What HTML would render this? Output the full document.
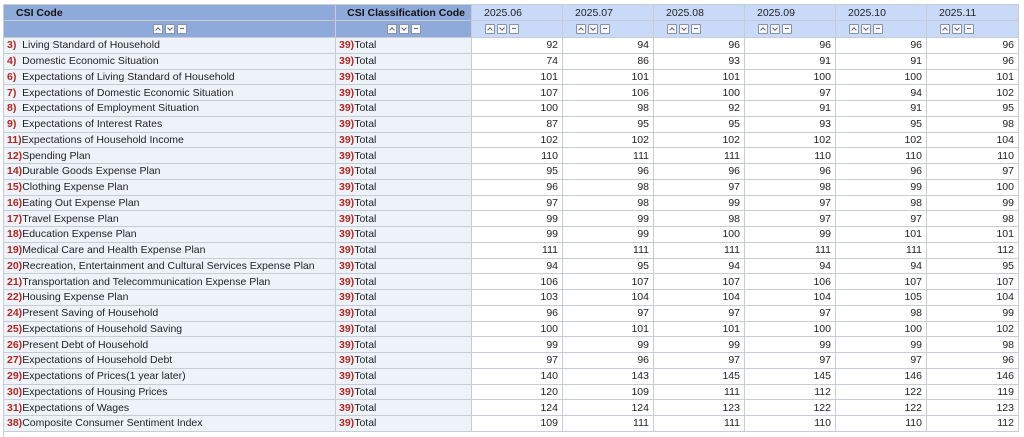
<!DOCTYPE html>
<html><head><meta charset="utf-8"><style>
body{margin:0;background:#fff;width:1024px;height:437px;overflow:hidden;font-family:"Liberation Sans",Arial,sans-serif;font-size:10.5px;color:#222;position:relative}
.r{position:absolute;left:3px;width:1016px;display:flex;box-sizing:border-box}
#rows{position:absolute;left:3px;top:38px;width:1016px}
#rows .r{position:relative;left:0;height:15.75px}
.c{box-sizing:border-box;border-right:1px solid #c8ccd4;border-bottom:1px solid #c8ccd4;padding:0 3px;white-space:nowrap;overflow:hidden;height:100%;display:flex;align-items:center}
.c:first-child{border-left:1px solid #c8ccd4}
.w1{width:333px}.w2{width:136px}.w3{width:91px}.w4{width:92px}
.hb{background:#8eaadb;font-weight:bold;color:#111}
.hd{background:#c9daf8;padding-left:12px}
.c1{background:#eef3fa}
.n{justify-content:flex-end;padding-right:4px}
b{color:#b3261e}
.ic{display:inline-block;width:8px;height:8px;border:1px solid #8a93a3;background:#f6f8fc;margin:0 1px;position:relative;border-radius:1px}
.ic:after{content:"";position:absolute;left:2px;top:3px;width:4px;height:1px;background:#667}
.ic.u:after,.ic.d:after{width:3px;height:3px;border-left:1px solid #667;border-top:1px solid #667;background:none;transform:rotate(45deg);top:3px;left:2px}
.ic.d:after{transform:rotate(225deg);top:1px}
.ctr{justify-content:center}
</style></head><body>
<div class="r" style="top:4px;height:17px;border-top:1px solid #c8ccd4"><div class="c w1 hb" style="padding-left:12px">CSI Code</div><div class="c w2 hb" style="justify-content:flex-end;padding-right:6px">CSI Classification Code</div><div class="c w3 hd">2025.06</div><div class="c w3 hd">2025.07</div><div class="c w3 hd">2025.08</div><div class="c w3 hd">2025.09</div><div class="c w3 hd">2025.10</div><div class="c w4 hd">2025.11</div></div>
<div class="r" style="top:21px;height:17px"><div class="c w1 hb ctr"><span class="ic u"></span><span class="ic d"></span><span class="ic"></span></div><div class="c w2 hb ctr"><span class="ic u"></span><span class="ic d"></span><span class="ic"></span></div><div class="c w3 hd"><span class="ic u"></span><span class="ic d"></span><span class="ic"></span></div><div class="c w3 hd"><span class="ic u"></span><span class="ic d"></span><span class="ic"></span></div><div class="c w3 hd"><span class="ic u"></span><span class="ic d"></span><span class="ic"></span></div><div class="c w3 hd"><span class="ic u"></span><span class="ic d"></span><span class="ic"></span></div><div class="c w3 hd"><span class="ic u"></span><span class="ic d"></span><span class="ic"></span></div><div class="c w4 hd"><span class="ic u"></span><span class="ic d"></span><span class="ic"></span></div></div>
<div id="rows">
<div class="r"><div class="c w1 c1"><b>3)</b>&nbsp; Living Standard of Household</div><div class="c w2 c1"><b>39)</b>Total</div><div class="c w3 n">92</div><div class="c w3 n">94</div><div class="c w3 n">96</div><div class="c w3 n">96</div><div class="c w3 n">96</div><div class="c w4 n">96</div></div>
<div class="r"><div class="c w1 c1"><b>4)</b>&nbsp; Domestic Economic Situation</div><div class="c w2 c1"><b>39)</b>Total</div><div class="c w3 n">74</div><div class="c w3 n">86</div><div class="c w3 n">93</div><div class="c w3 n">91</div><div class="c w3 n">91</div><div class="c w4 n">96</div></div>
<div class="r"><div class="c w1 c1"><b>6)</b>&nbsp; Expectations of Living Standard of Household</div><div class="c w2 c1"><b>39)</b>Total</div><div class="c w3 n">101</div><div class="c w3 n">101</div><div class="c w3 n">101</div><div class="c w3 n">100</div><div class="c w3 n">100</div><div class="c w4 n">101</div></div>
<div class="r"><div class="c w1 c1"><b>7)</b>&nbsp; Expectations of Domestic Economic Situation</div><div class="c w2 c1"><b>39)</b>Total</div><div class="c w3 n">107</div><div class="c w3 n">106</div><div class="c w3 n">100</div><div class="c w3 n">97</div><div class="c w3 n">94</div><div class="c w4 n">102</div></div>
<div class="r"><div class="c w1 c1"><b>8)</b>&nbsp; Expectations of Employment Situation</div><div class="c w2 c1"><b>39)</b>Total</div><div class="c w3 n">100</div><div class="c w3 n">98</div><div class="c w3 n">92</div><div class="c w3 n">91</div><div class="c w3 n">91</div><div class="c w4 n">95</div></div>
<div class="r"><div class="c w1 c1"><b>9)</b>&nbsp; Expectations of Interest Rates</div><div class="c w2 c1"><b>39)</b>Total</div><div class="c w3 n">87</div><div class="c w3 n">95</div><div class="c w3 n">95</div><div class="c w3 n">93</div><div class="c w3 n">95</div><div class="c w4 n">98</div></div>
<div class="r"><div class="c w1 c1"><b>11)</b>Expectations of Household Income</div><div class="c w2 c1"><b>39)</b>Total</div><div class="c w3 n">102</div><div class="c w3 n">102</div><div class="c w3 n">102</div><div class="c w3 n">102</div><div class="c w3 n">102</div><div class="c w4 n">104</div></div>
<div class="r"><div class="c w1 c1"><b>12)</b>Spending Plan</div><div class="c w2 c1"><b>39)</b>Total</div><div class="c w3 n">110</div><div class="c w3 n">111</div><div class="c w3 n">111</div><div class="c w3 n">110</div><div class="c w3 n">110</div><div class="c w4 n">110</div></div>
<div class="r"><div class="c w1 c1"><b>14)</b>Durable Goods Expense Plan</div><div class="c w2 c1"><b>39)</b>Total</div><div class="c w3 n">95</div><div class="c w3 n">96</div><div class="c w3 n">96</div><div class="c w3 n">96</div><div class="c w3 n">96</div><div class="c w4 n">97</div></div>
<div class="r"><div class="c w1 c1"><b>15)</b>Clothing Expense Plan</div><div class="c w2 c1"><b>39)</b>Total</div><div class="c w3 n">96</div><div class="c w3 n">98</div><div class="c w3 n">97</div><div class="c w3 n">98</div><div class="c w3 n">99</div><div class="c w4 n">100</div></div>
<div class="r"><div class="c w1 c1"><b>16)</b>Eating Out Expense Plan</div><div class="c w2 c1"><b>39)</b>Total</div><div class="c w3 n">97</div><div class="c w3 n">98</div><div class="c w3 n">99</div><div class="c w3 n">97</div><div class="c w3 n">98</div><div class="c w4 n">99</div></div>
<div class="r"><div class="c w1 c1"><b>17)</b>Travel Expense Plan</div><div class="c w2 c1"><b>39)</b>Total</div><div class="c w3 n">99</div><div class="c w3 n">99</div><div class="c w3 n">98</div><div class="c w3 n">97</div><div class="c w3 n">97</div><div class="c w4 n">98</div></div>
<div class="r"><div class="c w1 c1"><b>18)</b>Education Expense Plan</div><div class="c w2 c1"><b>39)</b>Total</div><div class="c w3 n">99</div><div class="c w3 n">99</div><div class="c w3 n">100</div><div class="c w3 n">99</div><div class="c w3 n">101</div><div class="c w4 n">101</div></div>
<div class="r"><div class="c w1 c1"><b>19)</b>Medical Care and Health Expense Plan</div><div class="c w2 c1"><b>39)</b>Total</div><div class="c w3 n">111</div><div class="c w3 n">111</div><div class="c w3 n">111</div><div class="c w3 n">111</div><div class="c w3 n">111</div><div class="c w4 n">112</div></div>
<div class="r"><div class="c w1 c1"><b>20)</b>Recreation, Entertainment and Cultural Services Expense Plan</div><div class="c w2 c1"><b>39)</b>Total</div><div class="c w3 n">94</div><div class="c w3 n">95</div><div class="c w3 n">94</div><div class="c w3 n">94</div><div class="c w3 n">94</div><div class="c w4 n">95</div></div>
<div class="r"><div class="c w1 c1"><b>21)</b>Transportation and Telecommunication Expense Plan</div><div class="c w2 c1"><b>39)</b>Total</div><div class="c w3 n">106</div><div class="c w3 n">107</div><div class="c w3 n">107</div><div class="c w3 n">106</div><div class="c w3 n">107</div><div class="c w4 n">107</div></div>
<div class="r"><div class="c w1 c1"><b>22)</b>Housing Expense Plan</div><div class="c w2 c1"><b>39)</b>Total</div><div class="c w3 n">103</div><div class="c w3 n">104</div><div class="c w3 n">104</div><div class="c w3 n">104</div><div class="c w3 n">105</div><div class="c w4 n">104</div></div>
<div class="r"><div class="c w1 c1"><b>24)</b>Present Saving of Household</div><div class="c w2 c1"><b>39)</b>Total</div><div class="c w3 n">96</div><div class="c w3 n">97</div><div class="c w3 n">97</div><div class="c w3 n">97</div><div class="c w3 n">98</div><div class="c w4 n">99</div></div>
<div class="r"><div class="c w1 c1"><b>25)</b>Expectations of Household Saving</div><div class="c w2 c1"><b>39)</b>Total</div><div class="c w3 n">100</div><div class="c w3 n">101</div><div class="c w3 n">101</div><div class="c w3 n">100</div><div class="c w3 n">100</div><div class="c w4 n">102</div></div>
<div class="r"><div class="c w1 c1"><b>26)</b>Present Debt of Household</div><div class="c w2 c1"><b>39)</b>Total</div><div class="c w3 n">99</div><div class="c w3 n">99</div><div class="c w3 n">99</div><div class="c w3 n">99</div><div class="c w3 n">99</div><div class="c w4 n">98</div></div>
<div class="r"><div class="c w1 c1"><b>27)</b>Expectations of Household Debt</div><div class="c w2 c1"><b>39)</b>Total</div><div class="c w3 n">97</div><div class="c w3 n">96</div><div class="c w3 n">97</div><div class="c w3 n">97</div><div class="c w3 n">97</div><div class="c w4 n">96</div></div>
<div class="r"><div class="c w1 c1"><b>29)</b>Expectations of Prices(1 year later)</div><div class="c w2 c1"><b>39)</b>Total</div><div class="c w3 n">140</div><div class="c w3 n">143</div><div class="c w3 n">145</div><div class="c w3 n">145</div><div class="c w3 n">146</div><div class="c w4 n">146</div></div>
<div class="r"><div class="c w1 c1"><b>30)</b>Expectations of Housing Prices</div><div class="c w2 c1"><b>39)</b>Total</div><div class="c w3 n">120</div><div class="c w3 n">109</div><div class="c w3 n">111</div><div class="c w3 n">112</div><div class="c w3 n">122</div><div class="c w4 n">119</div></div>
<div class="r"><div class="c w1 c1"><b>31)</b>Expectations of Wages</div><div class="c w2 c1"><b>39)</b>Total</div><div class="c w3 n">124</div><div class="c w3 n">124</div><div class="c w3 n">123</div><div class="c w3 n">122</div><div class="c w3 n">122</div><div class="c w4 n">123</div></div>
<div class="r"><div class="c w1 c1"><b>38)</b>Composite Consumer Sentiment Index</div><div class="c w2 c1"><b>39)</b>Total</div><div class="c w3 n">109</div><div class="c w3 n">111</div><div class="c w3 n">111</div><div class="c w3 n">110</div><div class="c w3 n">110</div><div class="c w4 n">112</div></div>
</div>
<div style="position:absolute;left:3px;top:432px;width:1px;height:5px;background:#c8ccd4"></div>
</body></html>
